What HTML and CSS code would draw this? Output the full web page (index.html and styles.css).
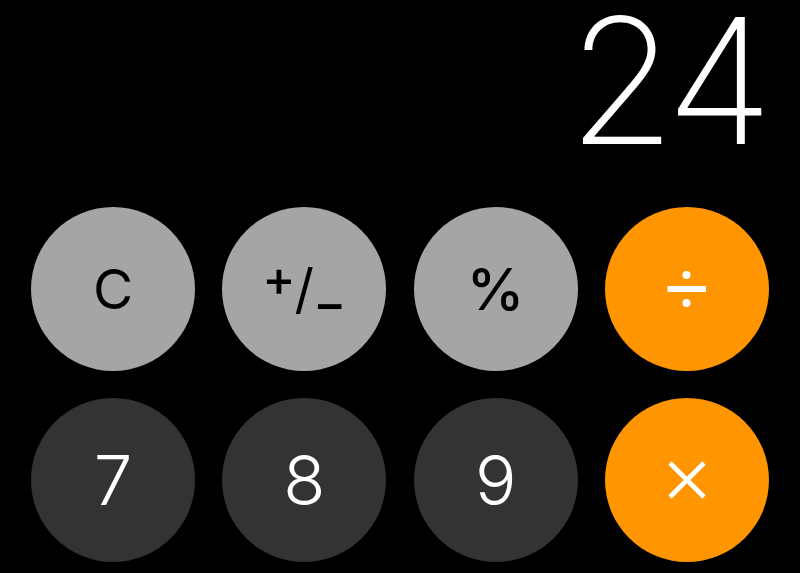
FILE: index.html
```html
<!DOCTYPE html>
<html lang="en">
<head>
<meta charset="utf-8">
<title>Calculator</title>
<link rel="stylesheet" href="styles.css">
</head>
<body>
<div class="calc">
  <div class="display"><span class="value">24</span></div>
  <div class="keypad">
    <div class="key fn"><span class="label">C</span></div>
    <div class="key fn"><span class="label pm"><span class="sup">+</span><span class="slash">/</span><span class="sub">−</span></span></div>
    <div class="key fn"><span class="label pct">%</span></div>
    <div class="key op">
      <svg class="icon" width="40" height="40" viewBox="0 0 40 40" aria-label="divide">
        <circle cx="19.5" cy="6" r="4" fill="#fff"/>
        <rect x="0.5" y="17" width="38.5" height="6" fill="#fff"/>
        <circle cx="19.5" cy="34" r="4" fill="#fff"/>
      </svg>
    </div>
    <div class="key num"><span class="label digit">7</span></div>
    <div class="key num"><span class="label digit">8</span></div>
    <div class="key num"><span class="label digit">9</span></div>
    <div class="key op">
      <svg class="icon" width="40" height="40" viewBox="0 0 40 40" aria-label="multiply">
        <path d="M3 3 L37 37 M37 3 L3 37" stroke="#fff" stroke-width="4.6" fill="none"/>
      </svg>
    </div>
  </div>
</div>
</body>
</html>
```

FILE: styles.css
```css
html, body {
  margin: 0;
  padding: 0;
  background: #000;
}

body {
  width: 800px;
  height: 573px;
  overflow: hidden;
  font-family: Inter, "Liberation Sans", sans-serif;
}

.calc {
  display: flex;
  flex-direction: column;
}

.display {
  height: 207px;
  box-sizing: border-box;
  display: flex;
  justify-content: flex-end;
  align-items: flex-start;
  padding-top: 5px;
  padding-right: 27px;
}

.value {
  color: #fff;
  font-size: 175px;
  font-weight: 200;
  line-height: 150px;
  letter-spacing: -7px;
  padding-right: 7px;
}

.keypad {
  display: grid;
  grid-template-columns: repeat(4, 164px);
  grid-auto-rows: 164px;
  column-gap: 27.33px;
  row-gap: 27px;
  padding: 0 31px;
}

.key {
  border-radius: 50%;
  display: flex;
  align-items: center;
  justify-content: center;
}

.fn {
  background: #a5a5a5;
  color: #000;
}

.num {
  background: #333333;
  color: #fff;
}

.op {
  background: #ff9500;
  color: #fff;
}

.label {
  line-height: 1;
  font-size: 55px;
  font-weight: 400;
}

.digit {
  font-size: 69px;
  font-weight: 300;
}

.pct {
  font-size: 58px;
  font-weight: 500;
}

.pm {
  display: flex;
  align-items: center;
  font-size: 50px;
}

.sup {
  font-size: 50px;
  font-weight: 500;
  transform: translateY(-11px);
}

.slash {
  font-size: 54px;
  margin: 0 -1px;
}

.sub {
  font-size: 50px;
  font-weight: 500;
  transform: translateY(14px);
}

.icon {
  display: block;
}
```
